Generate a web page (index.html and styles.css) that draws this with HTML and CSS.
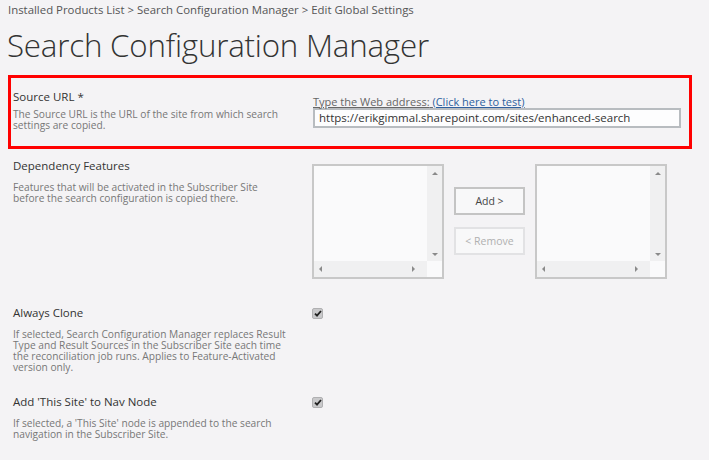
FILE: index.html
```html
<!DOCTYPE html>
<html lang="en">
<head>
    <meta charset="utf-8" />
    <title>Edit Global Settings</title>
    <link rel="stylesheet" href="styles.css">
</head>
<body>
    <div class="breadcrumb">Installed Products List &gt; Search Configuration Manager &gt; Edit Global Settings</div>
    <h1 class="page-title">Search Configuration Manager</h1>

    <div class="settings">
        <div class="row row-source highlight">
            <div class="label">
                <h3>Source URL *</h3>
                <p>The Source URL is the URL of the site from which search settings are copied.</p>
            </div>
            <div class="control">
                <div class="hint"><span>Type the Web address:</span> <a href="#">(Click here to test)</a></div>
                <div class="url-input">https://erikgimmal.sharepoint.com/sites/enhanced-search</div>
            </div>
        </div>

        <div class="row row-deps">
            <div class="label">
                <h3>Dependency Features</h3>
                <p>Features that will be activated in the Subscriber Site before the search configuration is copied there.</p>
            </div>
            <div class="control picker">
                <div class="listbox">
                    <div class="list-area"></div>
                    <div class="vbar"><span class="arr up"></span><span class="arr down"></span></div>
                    <div class="hbar"><span class="arr left"></span><span class="arr right"></span></div>
                    <div class="corner"></div>
                </div>
                <div class="picker-buttons">
                    <button class="btn">Add &gt;</button>
                    <button class="btn disabled">&lt; Remove</button>
                </div>
                <div class="listbox">
                    <div class="list-area"></div>
                    <div class="vbar"><span class="arr up"></span><span class="arr down"></span></div>
                    <div class="hbar"><span class="arr left"></span><span class="arr right"></span></div>
                    <div class="corner"></div>
                </div>
            </div>
        </div>

        <div class="row row-clone">
            <div class="label">
                <h3>Always Clone</h3>
                <p>If selected, Search Configuration Manager replaces Result Type and Result Sources in the Subscriber Site each time the reconciliation job runs. Applies to Feature-Activated version only.</p>
            </div>
            <div class="control">
                <span class="checkbox"><svg width="8" height="7" viewBox="0 0 8 7"><path d="M1 3.6 L3 5.6 L7 1" fill="none" stroke="#222" stroke-width="1.8"/></svg></span>
            </div>
        </div>

        <div class="row row-nav">
            <div class="label">
                <h3>Add 'This Site' to Nav Node</h3>
                <p>If selected, a 'This Site' node is appended to the search navigation in the Subscriber Site.</p>
            </div>
            <div class="control">
                <span class="checkbox"><svg width="8" height="7" viewBox="0 0 8 7"><path d="M1 3.6 L3 5.6 L7 1" fill="none" stroke="#222" stroke-width="1.8"/></svg></span>
            </div>
        </div>
    </div>
</body>
</html>
```

FILE: styles.css
```css
* {
    padding: 0;
    margin: 0;
    box-sizing: border-box;
}

body {
    background: #f4f3f5;
    font-family: "Open Sans", "Noto Sans", sans-serif;
    color: #444;
    width: 709px;
    height: 460px;
    overflow: hidden;
}

.breadcrumb {
    font-size: 11.4px;
    color: #555;
    padding: 3px 0 0 8px;
    line-height: 14px;
}

.page-title {
    font-weight: 300;
    font-size: 31.3px;
    color: #333;
    letter-spacing: -0.2px;
    padding-left: 7px;
    margin-top: 9px;
    line-height: 38px;
}

.settings {
    padding: 0 17px 0 8px;
}

.row {
    display: grid;
    grid-template-columns: 300px 1fr;
    padding-left: 5px;
}

.highlight {
    border: 3px solid #f00;
    padding: 11px 0 15px 2px;
    margin-top: 11px;
}

.label h3 {
    font-weight: 400;
    font-size: 11.5px;
    color: #333;
    line-height: 15px;
}

.label p {
    font-size: 10.2px;
    color: #777;
    line-height: 11px;
    margin-top: 9px;
    width: 276px;
}

.row-source .label p {
    margin-top: 5px;
}

.hint {
    font-size: 11px;
    line-height: 13px;
    margin-top: 6px;
    text-decoration: underline;
    color: #666;
}

.hint a {
    color: #2e5f9e;
}

.url-input {
    width: 368px;
    height: 20px;
    border: 2px solid #b8bcc0;
    background: #fdfdfe;
    font-size: 11.5px;
    line-height: 16px;
    padding-left: 4px;
    color: #333;
}

.row-deps {
    margin-top: 9px;
}

.picker {
    display: flex;
    align-items: flex-start;
    margin-left: -1px;
    padding-top: 6px;
}

.listbox {
    width: 132px;
    height: 115px;
    border: 2px solid #c8c8c8;
    display: grid;
    grid-template-columns: 1fr 15px;
    grid-template-rows: 1fr 16px;
    background: #fafafb;
}

.vbar {
    background: #f0f0f1;
    display: flex;
    flex-direction: column;
    justify-content: space-between;
    align-items: center;
    padding: 6px 0 5px;
}

.hbar {
    background: #f0f0f1;
    display: flex;
    justify-content: space-between;
    align-items: center;
    padding: 0 12px 0 5px;
}

.corner {
    background: #fafafb;
}

.arr {
    width: 0;
    height: 0;
    border: 3px solid transparent;
}

.arr.up {
    border-bottom-color: #8a8a8a;
    border-top-width: 0;
}

.arr.down {
    border-top-color: #8a8a8a;
    border-bottom-width: 0;
}

.arr.left {
    border-right-color: #8a8a8a;
    border-left-width: 0;
}

.arr.right {
    border-left-color: #8a8a8a;
    border-right-width: 0;
}

.picker-buttons {
    display: flex;
    flex-direction: column;
    gap: 12px;
    margin: 23px 10px 0 10px;
}

.btn {
    width: 71px;
    height: 28px;
    border: 2px solid #c4c4c4;
    background: #f8f8f9;
    font-family: "Open Sans", "Noto Sans", sans-serif;
    font-size: 10.5px;
    color: #444;
}

.btn.disabled {
    border-color: #e2e2e4;
    color: #b0b0b0;
}

.row-clone {
    margin-top: 26px;
}

.row-nav {
    margin-top: 21px;
}

.checkbox {
    display: flex;
    align-items: center;
    justify-content: center;
    width: 11px;
    height: 11px;
    margin: 3px 0 0 -1px;
    border-radius: 2px;
    background: #c9c9cb;
    border: 1px solid #b0b0b2;
}
```
